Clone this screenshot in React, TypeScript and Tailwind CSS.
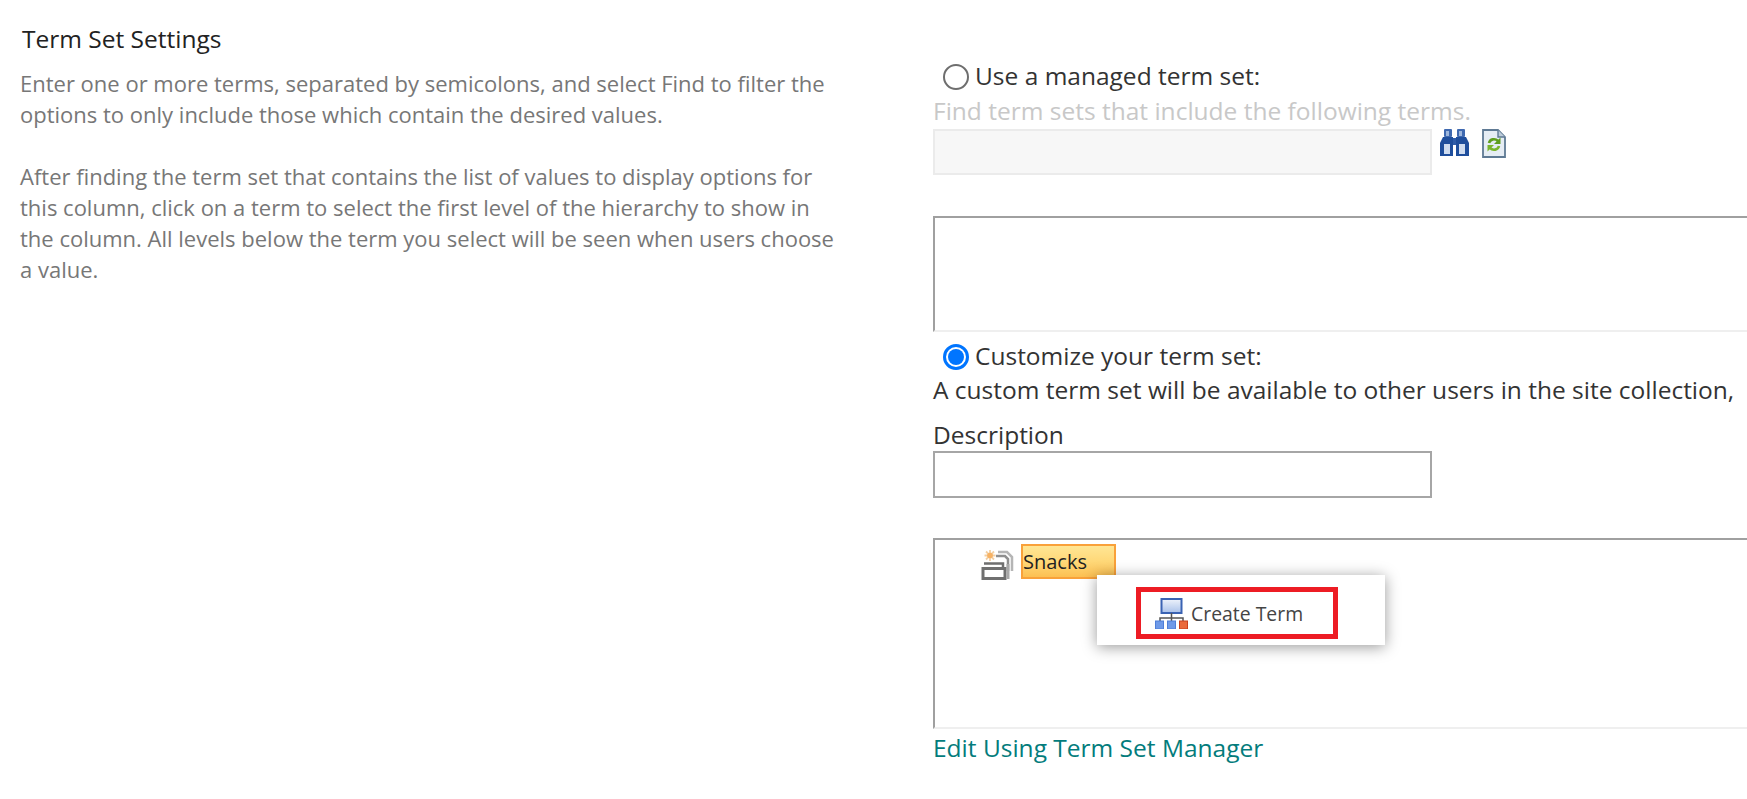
function NewTermSetIcon() {
  return (
    <svg width="33" height="30" viewBox="0 0 33 30" className="shrink-0">
      <path d="M9 0v11M3.500 5.500h11M5 1.500l8 8M13 1.500l-8 8" stroke="#f3cfa2" strokeWidth="1.800" />
      <circle cx="9" cy="5.500" r="2.800" fill="#f7b263" />
      <path d="M17 2h9l5 5v14" fill="none" stroke="#b5b5b5" strokeWidth="2.500" />
      <path d="M15 6h9l3 3v12" fill="none" stroke="#8f8f8f" strokeWidth="2.500" />
      <path d="M3 13.500h19v4" fill="none" stroke="#6f6f6f" strokeWidth="2.500" />
      <rect x="2" y="18.500" width="22" height="10" fill="#fff" stroke="#707070" strokeWidth="3" />
      <path d="M27 14v15" stroke="#a8a8a8" strokeWidth="3" />
    </svg>
  );
}

function HierarchyIcon() {
  return (
    <svg width="33" height="31" viewBox="0 0 33 31" className="shrink-0">
      <defs>
        <linearGradient id="screenFill" x1="0" y1="0" x2="0" y2="1">
          <stop offset="0" stopColor="#eef3fb" />
          <stop offset="1" stopColor="#a9c1ea" />
        </linearGradient>
      </defs>
      <rect x="6.500" y="1" width="20" height="14" fill="url(#screenFill)" stroke="#3a63b3" strokeWidth="2" />
      <path d="M16.500 15v8M5 23v-3h23v3" fill="none" stroke="#555" strokeWidth="1.500" />
      <rect x="0.500" y="23" width="8" height="8" fill="#6f9ae8" stroke="#4f7fd8" />
      <rect x="12.500" y="23" width="8" height="8" fill="#6f9ae8" stroke="#4f7fd8" />
      <rect x="24.500" y="23" width="8" height="8" fill="#ea6a3c" stroke="#c8401e" />
    </svg>
  );
}

function BinocularsIcon() {
  return (
    <svg width="31" height="27" viewBox="0 0 31 27" className="shrink-0">
      <rect x="5" y="0" width="8" height="8" rx="1" fill="#3f69b0" />
      <rect x="18" y="0" width="8" height="8" rx="1" fill="#3f69b0" />
      <rect x="7" y="2" width="3" height="5" fill="#9db6dc" />
      <rect x="20" y="2" width="3" height="5" fill="#9db6dc" />
      <path d="M4 8h10v19H1V14z" fill="#1f4e9c" />
      <path d="M17 8h10l3 6v13H17z" fill="#1f4e9c" />
      <rect x="14" y="9" width="3" height="7" fill="#2f5ca8" />
      <rect x="5" y="15" width="6" height="10" fill="#cfdcf0" />
      <rect x="20" y="15" width="6" height="10" fill="#cfdcf0" />
    </svg>
  );
}

function RefreshDocIcon() {
  return (
    <svg width="24" height="29" viewBox="0 0 24 29" className="shrink-0">
      <path d="M1 1h15l7 7v20H1z" fill="#e6edf4" stroke="#5f7a94" strokeWidth="1.800" />
      <path d="M16 1v7h7" fill="#bccbd9" stroke="#5f7a94" strokeWidth="1.400" />
      <path d="M7 14c1-4 6-5 9-2" fill="none" stroke="#5f9e1f" strokeWidth="2.600" />
      <path d="M18.500 8.500v6.500h-6.500z" fill="#5f9e1f" />
      <path d="M17 17c-1 4-6 5-9 2" fill="none" stroke="#7ab52d" strokeWidth="2.600" />
      <path d="M5.500 22.500v-6.500h6.500z" fill="#7ab52d" />
    </svg>
  );
}

function Radio({ checked }: { checked?: boolean }) {
  if (checked) {
    return (
      <span className="flex h-[26px] w-[26px] shrink-0 items-center justify-center rounded-full border-[3px] border-[#0075ff]">
        <span className="h-[16px] w-[16px] rounded-full bg-[#0075ff]"></span>
      </span>
    );
  }
  return <span className="h-[26px] w-[26px] shrink-0 rounded-full border-2 border-[#6e6e6e]"></span>;
}

export default function App() {
  return (
    <div className="flex h-[799px] w-[1747px] overflow-hidden bg-white font-['Open_Sans',sans-serif] text-[24.500px] leading-[30px] text-[#333]">
      {/* colonne gauche */}
      <div className="w-[933px] shrink-0 pt-[24px] pl-[20px]">
        <h2 className="pl-[2px] text-[#222]">Term Set Settings</h2>
        <div className="mt-[14px] text-[22px] leading-[31px] text-[#777]">
          <p>
            Enter one or more terms, separated by semicolons, and select Find to filter the
            <br />
            options to only include those which contain the desired values.
          </p>
          <p className="mt-[31px]">
            After finding the term set that contains the list of values to display options for
            <br />
            this column, click on a term to select the first level of the hierarchy to show in
            <br />
            the column. All levels below the term you select will be seen when users choose
            <br />a value.
          </p>
        </div>
      </div>

      {/* colonne droite */}
      <div className="w-[814px] shrink-0 pt-[64px]">
        <div className="flex h-[26px] items-center gap-[6px] pl-[10px]">
          <Radio />
          <span className="whitespace-nowrap pb-[2px]">Use a managed term set:</span>
        </div>
        <div className="mt-[6px] whitespace-nowrap text-[#c8c8c8]">Find term sets that include the following terms.</div>
        <div className="mt-[3px] flex items-start">
          <div className="h-[46px] w-[499px] border-2 border-[#ebebeb] bg-[#f7f7f7]"></div>
          <div className="ml-[7px] flex gap-[12px]">
            <BinocularsIcon />
            <RefreshDocIcon />
          </div>
        </div>

        <div className="mt-[41px] h-[116px] w-[900px] border-t-2 border-b-2 border-l-2 border-t-[#a0a0a0] border-b-[#efefef] border-l-[#a0a0a0]"></div>

        <div className="mt-[12px] flex h-[26px] items-center gap-[6px] pl-[10px]">
          <Radio checked />
          <span className="whitespace-nowrap pb-[2px]">Customize your term set:</span>
        </div>
        <div className="mt-[5px] whitespace-nowrap">A custom term set will be available to other users in the site collection,</div>
        <div className="mt-[15px]">Description</div>
        <div className="mt-[1px] h-[47px] w-[499px] border-2 border-[#a6a6a6]"></div>

        <div className="relative mt-[40px] h-[191px] w-[900px] border-t-2 border-b-2 border-l-2 border-t-[#a0a0a0] border-b-[#efefef] border-l-[#a0a0a0]">
          <div className="flex items-start gap-[7px] pt-[4px] pl-[46px]">
            <div className="pt-[6px]">
              <NewTermSetIcon />
            </div>
            <div className="h-[35px] w-[95px] border-2 border-[#f9a13a] bg-gradient-to-b from-[#ffe694] via-[#ffd878] to-[#fcc052] text-[20px] leading-[31px] text-[#222]">
              Snacks
            </div>
          </div>

          {/* menu contextuel */}
          <div className="absolute top-[35px] left-[162px] h-[70px] w-[288px] bg-white pt-[12px] pl-[39px] shadow-[0_2px_14px_rgba(0,0,0,0.4)]">
            <div className="flex h-[52px] w-[202px] items-center gap-[3px] border-[5px] border-[#ed1c24] pl-[14px] text-[19.400px] text-[#444]">
              <HierarchyIcon />
              <span className="whitespace-nowrap pt-[2px]">Create Term</span>
            </div>
          </div>
        </div>

        <a className="mt-[4px] block whitespace-nowrap text-[#037c7c]">Edit Using Term Set Manager</a>
      </div>
    </div>
  );
}
